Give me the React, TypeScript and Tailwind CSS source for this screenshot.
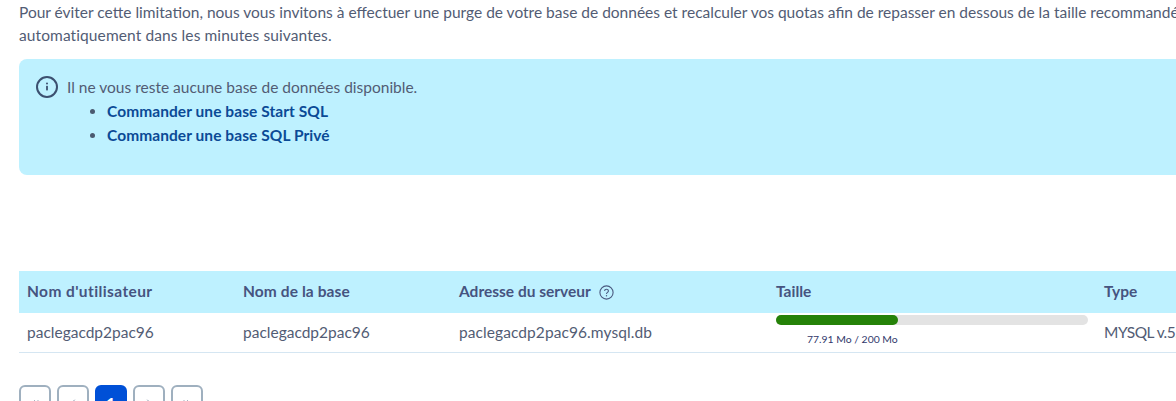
import React from 'react';
import { ChevronLeft, ChevronRight, ChevronsLeft, ChevronsRight } from 'lucide-react';

const font = "font-['Lato','Noto_Sans',sans-serif]";

function InfoIcon() {
  return (
    <svg width="24" height="24" viewBox="0 0 24 24" fill="none" className="shrink-0">
      <circle cx="12" cy="12" r="10" stroke="#3c5070" strokeWidth="2" />
      <circle cx="12" cy="8.6" r="1" fill="#3c5070" />
      <rect x="11.1" y="10.8" width="1.8" height="4.6" rx="0.6" fill="#3c5070" />
    </svg>
  );
}

function HelpIcon() {
  return (
    <svg width="15" height="15" viewBox="0 0 15 15" fill="none" className="shrink-0">
      <circle cx="7.5" cy="7.5" r="6.6" stroke="#4b5a80" strokeWidth="1.1" />
      <path d="M5.6 6 C5.6 3.7 9.4 3.7 9.4 6 C9.4 7.4 7.5 7.3 7.5 8.9" stroke="#4b5a80" strokeWidth="1.1" fill="none" />
      <circle cx="7.5" cy="10.8" r="0.7" fill="#4b5a80" />
    </svg>
  );
}

function PageButton({ children, active }: { children: React.ReactNode; active?: boolean }) {
  return (
    <div
      className={
        active
          ? 'flex h-9 w-8 items-center justify-center rounded-md border-2 border-[#0050d7] bg-[#0050d7] text-base font-bold text-white'
          : 'flex h-9 w-8 items-center justify-center rounded-md border-2 border-[#9fb0bf] bg-white text-[#8d9cb0]'
      }
    >
      {children}
    </div>
  );
}

export default function App() {
  return (
    <div className={`h-[401px] w-[1176px] overflow-hidden bg-white pl-[19px] ${font}`}>
      <div className="w-[1400px]">
        <p className="whitespace-nowrap pt-[1px] text-[15.5px] leading-[23px] text-[#525c74]">
          Pour éviter cette limitation, nous vous invitons à effectuer une purge de votre base de données et recalculer vos quotas afin de repasser en dessous de la taille recommandée.
          <br />
          <span className="tracking-[0.1px]">automatiquement dans les minutes suivantes.</span>
        </p>

        <div className="mt-[12px] flex h-[116px] gap-[8px] rounded-lg bg-[#bef1ff] pl-[16px] pt-[16px]">
          <InfoIcon />
          <div className="text-[15.5px] leading-[24px] text-[#525c74]">
            <div>Il ne vous reste aucune base de données disponible.</div>
            <ul className="list-disc pl-[40px] font-bold tracking-[0.07px] text-[#0b4a96] marker:text-[#4b5a70]">
              <li>Commander une base Start SQL</li>
              <li>Commander une base SQL Privé</li>
            </ul>
          </div>
        </div>

        <div className="mt-[96px] grid grid-cols-[216px_216px_317px_329px_200px] text-[15.5px]">
          <div className="contents font-bold text-[#465480]">
            <div className="flex h-[42px] items-center bg-[#bef1ff] px-2 tracking-[0.4px]">Nom d'utilisateur</div>
            <div className="flex h-[42px] items-center bg-[#bef1ff] px-2 tracking-[0.1px]">Nom de la base</div>
            <div className="flex h-[42px] items-center gap-2 bg-[#bef1ff] px-2">
              Adresse du serveur <HelpIcon />
            </div>
            <div className="flex h-[42px] items-center bg-[#bef1ff] px-2">Taille</div>
            <div className="flex h-[42px] items-center bg-[#bef1ff] px-[7px]">Type</div>
          </div>
          <div className="contents text-[#525c74]">
            <div className="flex h-[40px] items-center border-b border-[#d5e6f2] px-2">paclegacdp2pac96</div>
            <div className="flex h-[40px] items-center border-b border-[#d5e6f2] px-2">paclegacdp2pac96</div>
            <div className="flex h-[40px] items-center border-b border-[#d5e6f2] px-2 tracking-[0.08px]">paclegacdp2pac96.mysql.db</div>
            <div className="h-[40px] border-b border-[#d5e6f2] px-2 pt-[2px]">
              <div className="h-[10px] w-[312px] rounded-full bg-[#e3e3e3]">
                <div className="h-full w-[122px] rounded-full bg-[#258208]" />
              </div>
              <div className="ml-[31px] mt-[7px] text-[10.4px] leading-[14px] text-[#31386b]">77.91 Mo / 200 Mo</div>
            </div>
            <div className="flex h-[40px] items-center whitespace-nowrap border-b border-[#d5e6f2] px-[7px] tracking-[-0.5px]">MYSQL v.5.7</div>
          </div>
        </div>

        <div className="mt-[32px] flex gap-[6px]">
          <PageButton><ChevronsLeft size={12} /></PageButton>
          <PageButton><ChevronLeft size={12} /></PageButton>
          <PageButton active>1</PageButton>
          <PageButton><ChevronRight size={12} /></PageButton>
          <PageButton><ChevronsRight size={12} /></PageButton>
        </div>
      </div>
    </div>
  );
}
